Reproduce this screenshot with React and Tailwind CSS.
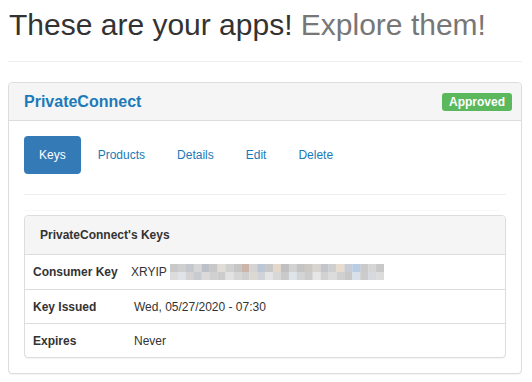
import React from "react";

const mosaic = [
  ["#c9c9c9","#cfcfcf","#c4c8cc","#d6d6d6","#bcc0c8","#c8c8c8","#e0dcd6","#d0d0d0","#c6c6c6","#cdb4a8","#d4d4d4","#bcc6d4","#c8c8c8","#e4d8cc","#c0c0c0","#d2d2d2","#c4c4c4","#ccc8c4","#d8d4d0","#c2c6ca","#cfcfcf","#e8dccc","#c8ccd4","#b8cce4","#cacaca","#d6d6d6","#c8c8c8"],
  ["#dcdcdc","#e0e4e8","#d4d4d4","#c8ccd0","#dadada","#d0d0d0","#cccccc","#e2e2e2","#d6d6d6","#cfcfcf","#dcd8d4","#d0d4d8","#e4e4e4","#d8d8d8","#cacaca","#dde4ea","#d4d4d4","#cccccc","#e6e6e6","#d2d2d2","#dcdcdc","#d0d0d0","#c8c8c8","#d8e0ea","#cccccc","#d6dade","#dcdcdc"],
];

function Mosaic() {
  const w = 214 / 27;
  return (
    <svg width="214" height="16" viewBox="0 0 214 16" className="block">
      {mosaic.map((row, r) =>
        row.map((c, i) => (
          <rect key={r + "-" + i} x={i * w} y={r * 8} width={w + 0.2} height="8" fill={c} />
        ))
      )}
    </svg>
  );
}

export default function App() {
  const tabs = ["Products", "Details", "Edit", "Delete"];
  return (
    <div className="min-h-screen bg-white text-[#333] font-['Liberation_Sans',Arial,sans-serif]">
      <div className="ml-2 w-[514px] pt-2">
        <h1 className="text-[30px] leading-[33px] font-normal m-0 pl-[1px]">
          These are your apps! <span className="text-[#777]">Explore them!</span>
        </h1>
        <div className="mt-5 mb-5 h-px bg-[#eee]" />
        <div className="border border-[#ddd] rounded bg-white shadow-[0_1px_1px_rgba(0,0,0,0.05)]">
          <div className="h-[38px] flex items-center justify-between pl-[15px] pr-[9px] bg-[#f5f5f5] border-b border-[#ddd] rounded-t">
            <span className="text-[16px] leading-[18px] font-bold text-[#1b7ab8]">PrivateConnect</span>
            <span className="h-[18px] leading-[18px] px-[7px] bg-[#5cb85c] text-white text-[12px] font-bold rounded-[3px]">
              Approved
            </span>
          </div>
          <div className="p-[15px]">
            <div className="flex gap-[2px]">
              <span className="px-[15px] py-[10px] text-[12px] leading-[18px] rounded bg-[#337ab7] text-white">Keys</span>
              {tabs.map((t) => (
                <span key={t} className="px-[15px] py-[10px] text-[12px] leading-[18px] rounded text-[#1b7ab8]">
                  {t}
                </span>
              ))}
            </div>
            <div className="mt-5 h-px bg-[#eee]" />
            <div className="mt-[15px] mb-[4px] h-px bg-[#f9f9f9] mr-[7px]" />
            <div className="border border-[#ddd] rounded bg-white shadow-[0_1px_1px_rgba(0,0,0,0.05)] text-[12px]">
              <div className="h-[39px] flex items-center px-[15px] bg-[#f5f5f5] border-b border-[#ddd] rounded-t font-bold">
                PrivateConnect's Keys
              </div>
              <div className="flex items-center h-[35px] border-b border-[#ddd]">
                <div className="w-[101px] pl-[8px] font-bold">Consumer Key</div>
                <div className="pl-[5px] flex items-center">
                  <span>XRYIP</span>
                  <span className="ml-[3px]">
                    <Mosaic />
                  </span>
                </div>
              </div>
              <div className="flex items-center h-[34px] border-b border-[#ddd]">
                <div className="w-[101px] pl-[8px] font-bold">Key Issued</div>
                <div className="pl-[8px]">Wed, 05/27/2020 - 07:30</div>
              </div>
              <div className="flex items-center h-[33px]">
                <div className="w-[101px] pl-[8px] font-bold">Expires</div>
                <div className="pl-[8px]">Never</div>
              </div>
            </div>
          </div>
        </div>
      </div>
    </div>
  );
}
